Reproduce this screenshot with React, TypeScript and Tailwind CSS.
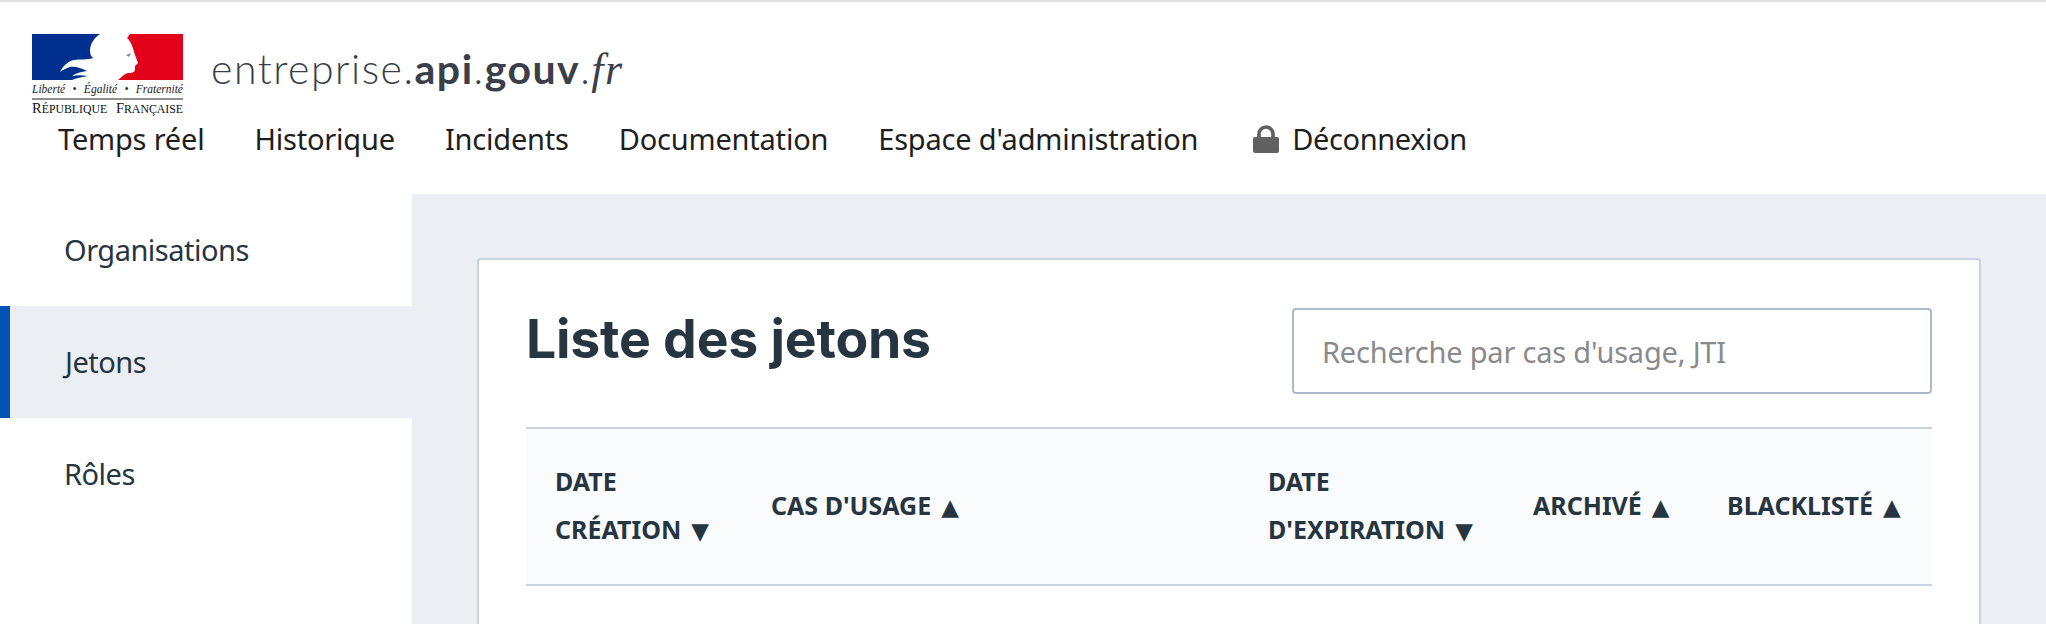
const SANS = "font-['Noto_Sans',sans-serif]";

const navLinks = ["Temps réel", "Historique", "Incidents", "Documentation", "Espace d'administration"];

function Marianne() {
  return (
    <svg viewBox="0 0 151 46" className="block h-[46px] w-[151px]">
      <rect width="151" height="46" fill="#fff" />
      <path d="M0 0H68C62 4 58 10 58 17C58 20 59 22 61 24L64 46H0Z" fill="#00308f" />
      <path d="M98 0L95 4C99 7 101 14 103 21L106 29L103 32L103 36C102 39 99 39 96 39C92 40 90 43 86 46H151V0Z" fill="#e2001a" />
      <path d="M28 38C31 32 36 27 42 26C48 25 55 26 62 24L66 46H40C44 44 50 43 56 42C50 41 45 41 40 42C44 39 49 38 55 37C49 34 43 32 38 33C34 34 31 36 28 38Z" fill="#fff" />
      <path d="M94 21L99 19L97 23Z" fill="#8a8a8a" />
    </svg>
  );
}

function Logo() {
  return (
    <div className="flex w-[151px] shrink-0 flex-col">
      <Marianne />
      <div className="mt-[3px] flex justify-between font-['Liberation_Serif',serif] text-[11.5px] leading-[13px] text-[#222] italic">
        <span>Liberté</span>
        <span>•</span>
        <span>Égalité</span>
        <span>•</span>
        <span>Fraternité</span>
      </div>
      <div className="mt-[2px] h-[2px] bg-[#8f8f8f]" />
      <div className="flex justify-between whitespace-nowrap font-['Liberation_Serif',serif] text-[11.8px] leading-[16px] text-[#111]">
        <span>
          <span className="text-[14.5px]">R</span>ÉPUBLIQUE
        </span>
        <span>
          <span className="text-[14.5px]">F</span>RANÇAISE
        </span>
      </div>
    </div>
  );
}

function Lock() {
  return (
    <svg viewBox="0 0 26 28" className="h-[28px] w-[26px] shrink-0">
      <path d="M6 14V9a7 7 0 0 1 14 0v5" fill="none" stroke="#616161" strokeWidth="3.6" />
      <rect x="0" y="12" width="26" height="16" rx="2" fill="#616161" />
    </svg>
  );
}

function Header() {
  return (
    <header className="h-[192px] bg-white">
      <div className="flex h-[110px] items-start pt-[32px] pl-[32px]">
        <Logo />
        <div className="mt-[10px] ml-[28px] whitespace-nowrap font-['Lato',sans-serif] text-[41px] leading-[50px] font-light tracking-[1.5px] text-[#3a3f4a]">
          entreprise.<span className="font-bold">api</span>.<span className="font-bold">gouv</span>.
          <span className="font-['Liberation_Serif',serif] text-[44px] italic">fr</span>
        </div>
      </div>
      <nav className={`mt-[7px] flex items-center pl-[58px] text-[29px] leading-[40px] tracking-[-0.2px] text-[#1e1e1e] ${SANS}`}>
        {navLinks.map((link) => (
          <a key={link} className="mr-[50px] whitespace-nowrap">
            {link}
          </a>
        ))}
        <a className="ml-[5px] flex items-center gap-[13px] whitespace-nowrap tracking-[-0.4px]">
          <Lock />
          Déconnexion
        </a>
      </nav>
    </header>
  );
}

function Sidebar() {
  return (
    <aside className={`w-[412px] shrink-0 bg-white text-[29px] tracking-[-0.5px] text-[#26353f] ${SANS}`}>
      <div className="flex h-[112px] items-center pl-[64px]">Organisations</div>
      <div className="flex h-[112px] items-center border-l-[10px] border-[#0053b3] bg-[#ebeef3] pl-[55px]">Jetons</div>
      <div className="flex h-[112px] items-center pl-[64px]">Rôles</div>
    </aside>
  );
}

function SortHead({ lines, arrow }: { lines: string[]; arrow: string }) {
  return (
    <th className="px-[29px] pt-[28px] pb-[29px] text-left align-middle font-bold">
      {lines.map((line, idx) => (
        <div key={line} className="whitespace-nowrap">
          {line}
          {idx === lines.length - 1 ? <span className="ml-[10px] font-['DejaVu_Sans',sans-serif] text-[23px]">{arrow}</span> : null}
        </div>
      ))}
    </th>
  );
}

function TokenCard() {
  return (
    <section className="h-full rounded-t-[4px] border-x-2 border-t-2 border-[#c9d3df] bg-white px-[47px] pt-[44px]">
      <div className="flex items-start justify-between">
        <h1 className="font-['Inter',sans-serif] text-[53.5px] leading-[70px] font-bold tracking-[-0.2px] text-[#26353f]">Liste des jetons</h1>
        <input
          placeholder="Recherche par cas d'usage, JTI"
          className={`mt-[4px] h-[86px] w-[640px] rounded-[4px] border-2 border-[#aebacb] bg-white px-[28px] text-[29px] tracking-[-0.2px] placeholder:text-[#8a8a8a] ${SANS}`}
        />
      </div>
      <table className={`mt-[33px] w-full table-fixed border-y-2 border-[#c9d3df] bg-[#fafbfc] text-[25px] leading-[48px] text-[#26353f] uppercase ${SANS}`}>
        <colgroup>
          <col className="w-[216px]" />
          <col className="w-[497px]" />
          <col className="w-[265px]" />
          <col className="w-[194px]" />
          <col className="w-[234px]" />
        </colgroup>
        <thead>
          <tr>
            <SortHead lines={["Date", "Création"]} arrow="▼" />
            <SortHead lines={["Cas d'usage"]} arrow="▲" />
            <SortHead lines={["Date", "d'expiration"]} arrow="▼" />
            <SortHead lines={["Archivé"]} arrow="▲" />
            <SortHead lines={["Blacklisté"]} arrow="▲" />
          </tr>
        </thead>
      </table>
    </section>
  );
}

export default function App() {
  return (
    <div className="flex h-[624px] flex-col overflow-hidden border-t-2 border-[#e0e0e0] bg-white">
      <Header />
      <div className="flex min-h-0 flex-1">
        <Sidebar />
        <main className="min-w-0 flex-1 bg-[#ebeef3] px-[65px] pt-[64px]">
          <TokenCard />
        </main>
      </div>
    </div>
  );
}
